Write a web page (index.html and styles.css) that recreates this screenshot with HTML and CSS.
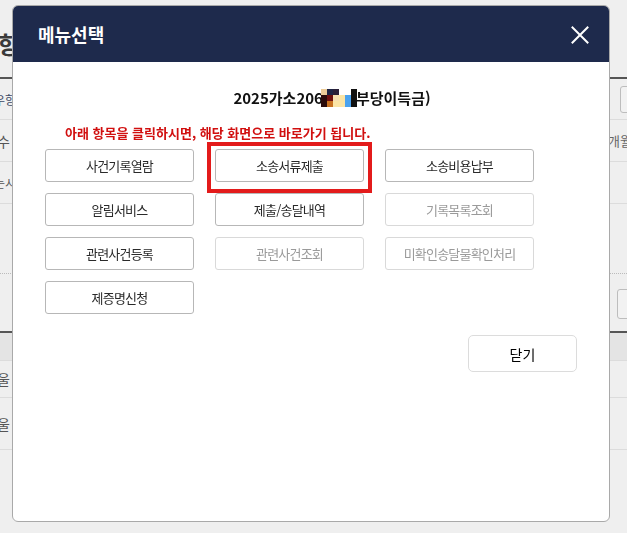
FILE: index.html
```html
<!DOCTYPE html>
<html lang="ko">
<head>
<meta charset="utf-8">
<title>메뉴선택</title>
<link rel="stylesheet" href="styles.css">
</head>
<body>
<div class="page">
  <div class="page-head"><span class="page-title">사항</span></div>
  <div class="row row-first">
    <span class="cell-left cell-blue">우항</span>
    <span class="mini-box"></span>
  </div>
  <div class="row">
    <span class="cell-left cell-big">수</span>
    <span class="cell-right">개월</span>
  </div>
  <div class="row">
    <span class="cell-left">는시</span>
  </div>
  <div class="blank">
    <div class="dotted"></div>
    <div class="blank-bottom"><span class="mini-box mini-box-2"></span></div>
  </div>
  <div class="thead"></div>
  <div class="row row-t1"><span class="cell-left cell-big">울</span></div>
  <div class="row row-t2"><span class="cell-left cell-big">울</span></div>
</div>

<div class="modal">
  <div class="modal-header">
    <h1 class="modal-title">메뉴선택</h1>
    <svg class="close-icon" viewBox="0 0 18 18" width="18" height="18" aria-hidden="true">
      <path d="M1.5 1.5 L16.5 16.5 M16.5 1.5 L1.5 16.5" stroke="#ffffff" stroke-width="2" fill="none" stroke-linecap="square"/>
    </svg>
  </div>
  <div class="modal-body">
    <div class="case-title">2025가소206<span class="mosaic"><i class="m1"></i><i class="m2"></i><i class="m3"></i><i class="m4"></i><i class="m4"></i><i class="m6"></i><i class="m7"></i><i class="m8"></i><i class="m9"></i><i class="m10"></i><i class="m11"></i><i class="m6"></i><i class="m7"></i><i class="m12"></i><i class="m10"></i><i class="m10"></i><i class="m11"></i><i class="m6"></i></span>부당이득금)</div>
    <p class="notice">아래 항목을 클릭하시면, 해당 화면으로 바로가기 됩니다.</p>
    <div class="menu-grid">
      <button class="menu-btn">사건기록열람</button>
      <button class="menu-btn">소송서류제출</button>
      <button class="menu-btn">소송비용납부</button>
      <button class="menu-btn">알림서비스</button>
      <button class="menu-btn">제출/송달내역</button>
      <button class="menu-btn disabled">기록목록조회</button>
      <button class="menu-btn">관련사건등록</button>
      <button class="menu-btn disabled">관련사건조회</button>
      <button class="menu-btn disabled">미확인송달물확인처리</button>
      <button class="menu-btn">제증명신청</button>
    </div>
    <div class="footer">
      <button class="close-btn">닫기</button>
    </div>
  </div>
  <div class="highlight"></div>
</div>
</body>
</html>
```

FILE: styles.css
```css
* { box-sizing: border-box; }

html, body {
  margin: 0;
  padding: 0;
  width: 627px;
  height: 533px;
  overflow: hidden;
  background: #efefef;
  font-family: "Noto Sans CJK KR", "Noto Sans", sans-serif;
}

/* ---------- page behind the modal ---------- */
.page {
  width: 627px;
  display: flex;
  flex-direction: column;
}
.page-head {
  height: 77px;
  display: flex;
  align-items: center;
  padding-top: 10px;
}
.page-title {
  font-size: 24px;
  font-weight: bold;
  color: #3a3a3a;
  margin-left: -24px;
}
.row {
  display: flex;
  justify-content: space-between;
  align-items: center;
  border-bottom: 1px solid #dcdcdc;
  height: 42px;
  color: #555;
}
.row-first {
  border-top: 2px solid #555;
  height: 43px;
}
.cell-left {
  font-size: 12px;
  margin-left: -6px;
  white-space: nowrap;
}
.cell-big { font-size: 14px; margin-left: -3px; }
.cell-blue { color: #3d4a66; }
.cell-right {
  font-size: 13px;
  margin-right: -5px;
  color: #666;
}
.mini-box {
  width: 30px;
  height: 27px;
  margin-right: -23px;
  border: 1px solid #bdbdbd;
  border-radius: 3px;
  background: #f2f2f2;
}
.blank {
  height: 127px;
  display: flex;
  flex-direction: column;
  justify-content: flex-end;
}
.dotted {
  border-top: 1px dotted #bbb;
  margin-bottom: 15px;
}
.blank-bottom {
  display: flex;
  justify-content: flex-end;
  height: 42px;
}
.mini-box-2 {
  height: 30px;
  margin-right: -20px;
}
.thead {
  height: 30px;
  border-top: 2px solid #555;
  border-bottom: 1px solid #dcdcdc;
  background: #e4e4e4;
}
.row-t1 { height: 37px; }
.row-t2 { height: 52px; }

/* ---------- modal ---------- */
.modal {
  position: fixed;
  left: 12px;
  top: 5px;
  width: 598px;
  height: 517px;
  background: #ffffff;
  border: 1px solid #a9a9a9;
  border-radius: 6px;
  display: flex;
  flex-direction: column;
}
.modal-header {
  height: 56px;
  background: #1e2a4c;
  border-radius: 5px 5px 0 0;
  display: flex;
  align-items: center;
  justify-content: space-between;
  padding: 0 20px 0 25px;
}
.modal-title {
  margin: 0;
  font-size: 18px;
  font-weight: bold;
  color: #ffffff;
  line-height: 1;
}
.close-icon { display: block; margin-top: 2px; }

.modal-body {
  padding: 26px 32px 0 32px;
  display: flex;
  flex-direction: column;
}
.case-title {
  font-size: 15px;
  font-weight: bold;
  color: #111;
  line-height: 20px;
  text-align: center;
  padding-left: 42px;
  display: flex;
  justify-content: center;
  align-items: center;
}
.mosaic {
  display: inline-grid;
  grid-template-columns: repeat(6, 6px);
  grid-template-rows: repeat(3, 6px);
  margin: 0 -1px 0 -2px;
}
.mosaic i { display: block; }
.m1 { background: #eccb98; }
.m2 { background: #1e2445; }
.m3 { background: #2a2038; }
.m4 { background: #ffffff; }
.m6 { background: #111111; }
.m7 { background: #2a0a0a; }
.m8 { background: #6e1010; }
.m9 { background: #f6dfb0; }
.m10 { background: #fbe4a4; }
.m11 { background: #4aa2ee; }
.m12 { background: #c8701e; }

.notice {
  margin: 17px 0 0 20px;
  font-size: 13px;
  font-weight: bold;
  line-height: 16px;
  color: #d10f0f;
}
.menu-grid {
  margin-top: 8px;
  display: grid;
  grid-template-columns: repeat(3, 149px);
  grid-auto-rows: 33px;
  column-gap: 21px;
  row-gap: 11px;
}
.menu-btn {
  font-family: inherit;
  font-size: 13px;
  letter-spacing: -0.8px;
  color: #2a2a2a;
  background: #ffffff;
  border: 1px solid #b7b7b7;
  border-radius: 3px;
  padding: 0;
  cursor: pointer;
}
.menu-btn.disabled {
  color: #9a9a9a;
  border-color: #d9d9d9;
}
.footer {
  margin-top: 21px;
  display: flex;
  justify-content: flex-end;
}
.close-btn {
  width: 109px;
  height: 37px;
  font-family: inherit;
  font-size: 14px;
  color: #000;
  background: #ffffff;
  border: 1px solid #dcdcdc;
  border-radius: 5px;
  padding: 0;
}

.highlight {
  position: absolute;
  left: 194px;
  top: 136px;
  width: 165px;
  height: 51px;
  border: 4px solid #e31b1b;
}
```
